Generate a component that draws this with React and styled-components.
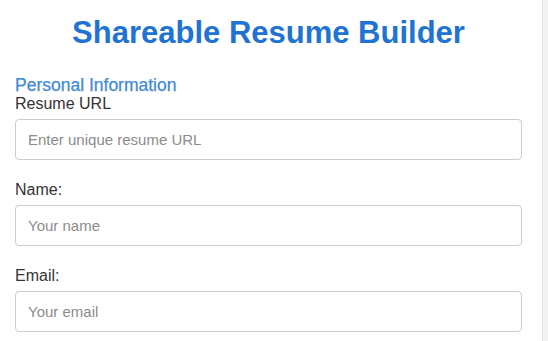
import React from "react";
import styled, { createGlobalStyle } from "styled-components";

const GlobalStyle = createGlobalStyle`
  html, body {
    margin: 0;
    padding: 0;
    background: #f3f3f3;
    font-family: "Liberation Sans", Arial, sans-serif;
  }
  * {
    box-sizing: border-box;
  }
`;

const Page = styled.div`
  width: 543px;
  height: 341px;
  overflow: hidden;
  padding: 16px 20px 0 15px;
  background: #ffffff;
  border-right: 1px solid #e2e2e2;
`;

const Title = styled.h1`
  margin: 0 0 26px;
  font-size: 31px;
  line-height: 33px;
  font-weight: bold;
  text-align: center;
  color: #1f73d3;
`;

const SectionHeading = styled.h3`
  margin: 0;
  font-size: 17.5px;
  line-height: 20px;
  font-weight: normal;
  color: #3f8ad4;
  -webkit-text-stroke: 0.25px #3f8ad4;
`;

const Field = styled.div`
  display: flex;
  flex-direction: column;
  margin-bottom: 21px;

  &:last-child {
    margin-bottom: 0;
  }
`;

const Label = styled.label`
  font-size: 16px;
  line-height: 18px;
  color: #333333;
  margin-bottom: 6px;
`;

const Input = styled.input`
  width: 100%;
  height: 41px;
  padding: 0 12px;
  border: 1px solid #cdcdcd;
  border-radius: 4px;
  font-family: "Liberation Sans", Arial, sans-serif;
  font-size: 15px;
  color: #333;
  outline: none;

  &::placeholder {
    color: #8c8c8c;
  }
`;

const fields = [
  { id: "url", label: "Resume URL", placeholder: "Enter unique resume URL" },
  { id: "name", label: "Name:", placeholder: "Your name" },
  { id: "email", label: "Email:", placeholder: "Your email" },
];

export default function App() {
  return (
    <>
      <GlobalStyle />
      <Page>
        <Title>Shareable Resume Builder</Title>
        <SectionHeading>Personal Information</SectionHeading>
        {fields.map((f) => (
          <Field key={f.id}>
            <Label htmlFor={f.id}>{f.label}</Label>
            <Input id={f.id} type="text" placeholder={f.placeholder} />
          </Field>
        ))}
      </Page>
    </>
  );
}
